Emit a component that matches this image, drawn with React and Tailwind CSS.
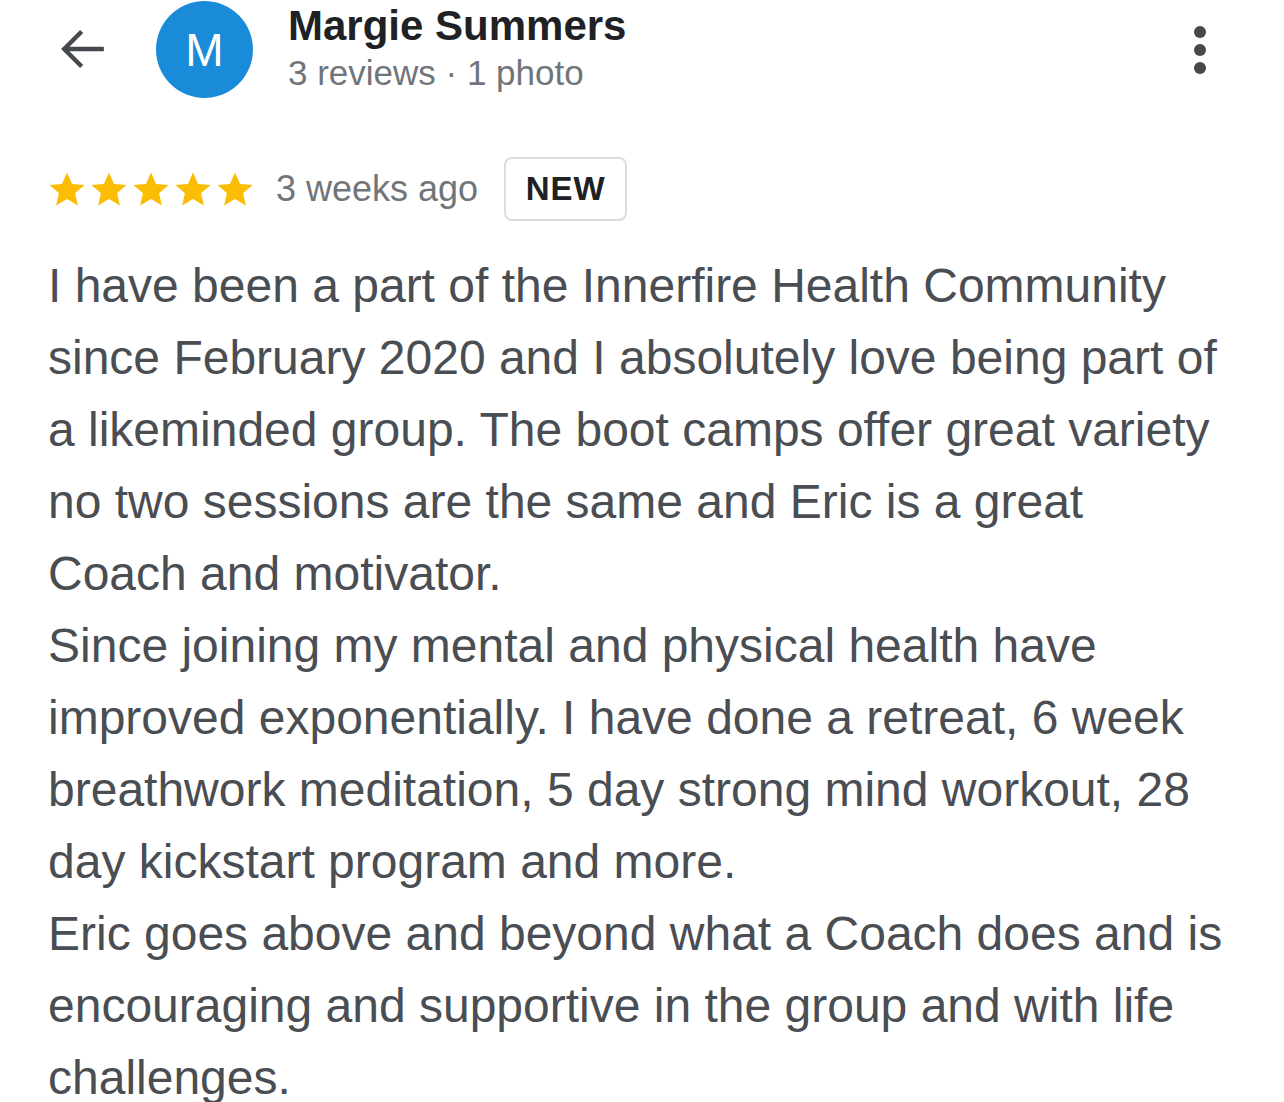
import React from 'react';

const lines = [
  'I have been a part of the Innerfire Health Community',
  'since February 2020 and I absolutely love being part of',
  'a likeminded group. The boot camps offer great variety',
  'no two sessions are the same and Eric is a great',
  'Coach and motivator.',
  'Since joining my mental and physical health have',
  'improved exponentially. I have done a retreat, 6 week',
  'breathwork meditation, 5 day strong mind workout, 28',
  'day kickstart program and more.',
  'Eric goes above and beyond what a Coach does and is',
  'encouraging and supportive in the group and with life',
  'challenges.',
];

function Star() {
  return (
    <svg viewBox="0 0 24 24" className="w-[42px] h-[42px]" fill="#fbbc04">
      <path d="M12 2.5l2.9 6.6 7.1.6-5.4 4.7 1.6 7-6.2-3.7-6.2 3.7 1.6-7L2 9.7l7.1-.6z" />
    </svg>
  );
}

export default function App() {
  return (
    <div className="w-[1284px] h-[1102px] overflow-hidden bg-white" style={{ fontFamily: '"Liberation Sans", Arial, sans-serif' }}>
      {/* Header */}
      <div className="flex items-start pl-[56px] pr-[78px] pt-[1px]">
        <svg viewBox="0 0 24 24" className="w-[56px] h-[56px] mt-[20px] text-[#45484d]" fill="none" stroke="currentColor" strokeWidth="1.9">
          <path d="M20.5 12H3.5M11 4.5 3.5 12l7.5 7.5" />
        </svg>
        <div className="ml-[44px] w-[97px] h-[97px] rounded-full bg-[#1a8bd9] flex items-center justify-center text-white text-[46px] leading-none">
          M
        </div>
        <div className="ml-[35px] flex-1">
          <div className="text-[42px] font-bold text-[#202124] leading-[50px]">Margie Summers</div>
          <div className="text-[35px] text-[#70757a] leading-[44px]">3 reviews · 1 photo</div>
        </div>
        <div className="flex flex-col gap-[6px] mt-[25px]">
          <span className="w-[12px] h-[12px] rounded-full bg-[#45484d]" />
          <span className="w-[12px] h-[12px] rounded-full bg-[#45484d]" />
          <span className="w-[12px] h-[12px] rounded-full bg-[#45484d]" />
        </div>
      </div>

      {/* Rating row */}
      <div className="flex items-center pl-[46px] mt-[59px]">
        <div className="flex">
          <Star /><Star /><Star /><Star /><Star />
        </div>
        <span className="ml-[20px] text-[36px] text-[#70757a]">3 weeks ago</span>
        <span className="ml-[26px] h-[64px] w-[123px] flex items-center justify-center border-2 border-[#dadce0] rounded-[8px] text-[33px] font-bold text-[#202124] tracking-[1px]">
          NEW
        </span>
      </div>

      {/* Review text */}
      <div className="pl-[48px] mt-[29px] text-[48px] leading-[72px] text-[#4a4d52] whitespace-nowrap">
        {lines.map((l, i) => (
          <div key={i}>{l}</div>
        ))}
      </div>
    </div>
  );
}
